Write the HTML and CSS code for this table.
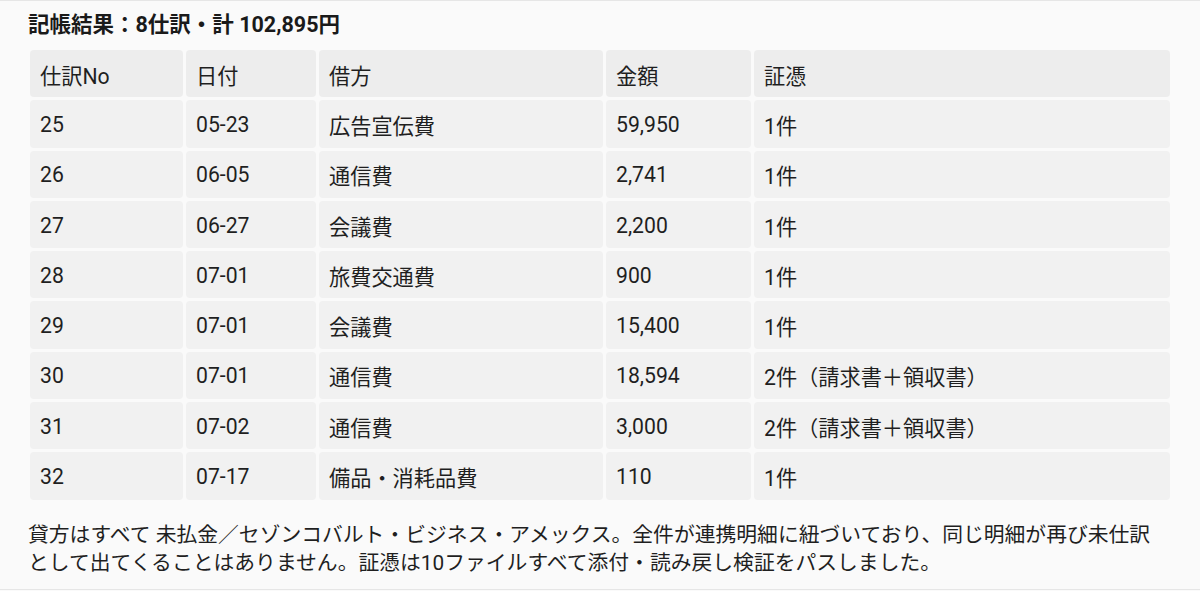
FILE: index.html
```html
<!DOCTYPE html>
<html lang="ja">
<head>
<meta charset="utf-8">
<title>記帳結果</title>
<link rel="stylesheet" href="styles.css">
</head>
<body>
<div class="page">
  <h2 class="title">記帳結果：8仕訳・計 102,895円</h2>
  <div class="grid">
    <div class="cell head">仕訳No</div>
    <div class="cell head">日付</div>
    <div class="cell head">借方</div>
    <div class="cell head">金額</div>
    <div class="cell head">証憑</div>

    <div class="cell">25</div><div class="cell">05-23</div><div class="cell">広告宣伝費</div><div class="cell">59,950</div><div class="cell">1件</div>
    <div class="cell">26</div><div class="cell">06-05</div><div class="cell">通信費</div><div class="cell">2,741</div><div class="cell">1件</div>
    <div class="cell">27</div><div class="cell">06-27</div><div class="cell">会議費</div><div class="cell">2,200</div><div class="cell">1件</div>
    <div class="cell">28</div><div class="cell">07-01</div><div class="cell">旅費交通費</div><div class="cell">900</div><div class="cell">1件</div>
    <div class="cell">29</div><div class="cell">07-01</div><div class="cell">会議費</div><div class="cell">15,400</div><div class="cell">1件</div>
    <div class="cell">30</div><div class="cell">07-01</div><div class="cell">通信費</div><div class="cell">18,594</div><div class="cell">2件（請求書＋領収書）</div>
    <div class="cell">31</div><div class="cell">07-02</div><div class="cell">通信費</div><div class="cell">3,000</div><div class="cell">2件（請求書＋領収書）</div>
    <div class="cell">32</div><div class="cell">07-17</div><div class="cell">備品・消耗品費</div><div class="cell">110</div><div class="cell">1件</div>
  </div>
  <p class="note">貸方はすべて 未払金／セゾンコバルト・ビジネス・アメックス。全件が連携明細に紐づいており、同じ明細が再び未仕訳として出てくることはありません。証憑は10ファイルすべて添付・読み戻し検証をパスしました。</p>
</div>
</body>
</html>
```

FILE: styles.css
```css
html, body {
  margin: 0;
  padding: 0;
  background: #fafafa;
}
body {
  font-family: Roboto, "Noto Sans CJK JP", sans-serif;
  color: #1f1f1f;
}
.page {
  box-sizing: border-box;
  height: 590px;
  border-top: 1px solid #e6e6e6;
  border-bottom: 1px solid #e6e6e6;
  padding: 0 30px 0 28px;
}
.title {
  margin: 10px 0 11px;
  font-size: 21.5px;
  line-height: 28px;
  font-weight: 700;
  color: #1a1a1a;
}
.grid {
  display: grid;
  margin-left: 2px;
  grid-template-columns: 153px 130px 284px 145px 416px;
  grid-auto-rows: 47.3px;
  gap: 3px;
}
.cell {
  background: #f1f1f1;
  border-radius: 4px;
  padding: 1px 10px 0;
  display: flex;
  align-items: center;
  font-size: 21.2px;
  white-space: nowrap;
}
.cell.head {
  background: #ededed;
}
.note {
  margin: 21px 0 0;
  font-size: 20.8px;
  line-height: 28px;
  color: #1f1f1f;
}
```
